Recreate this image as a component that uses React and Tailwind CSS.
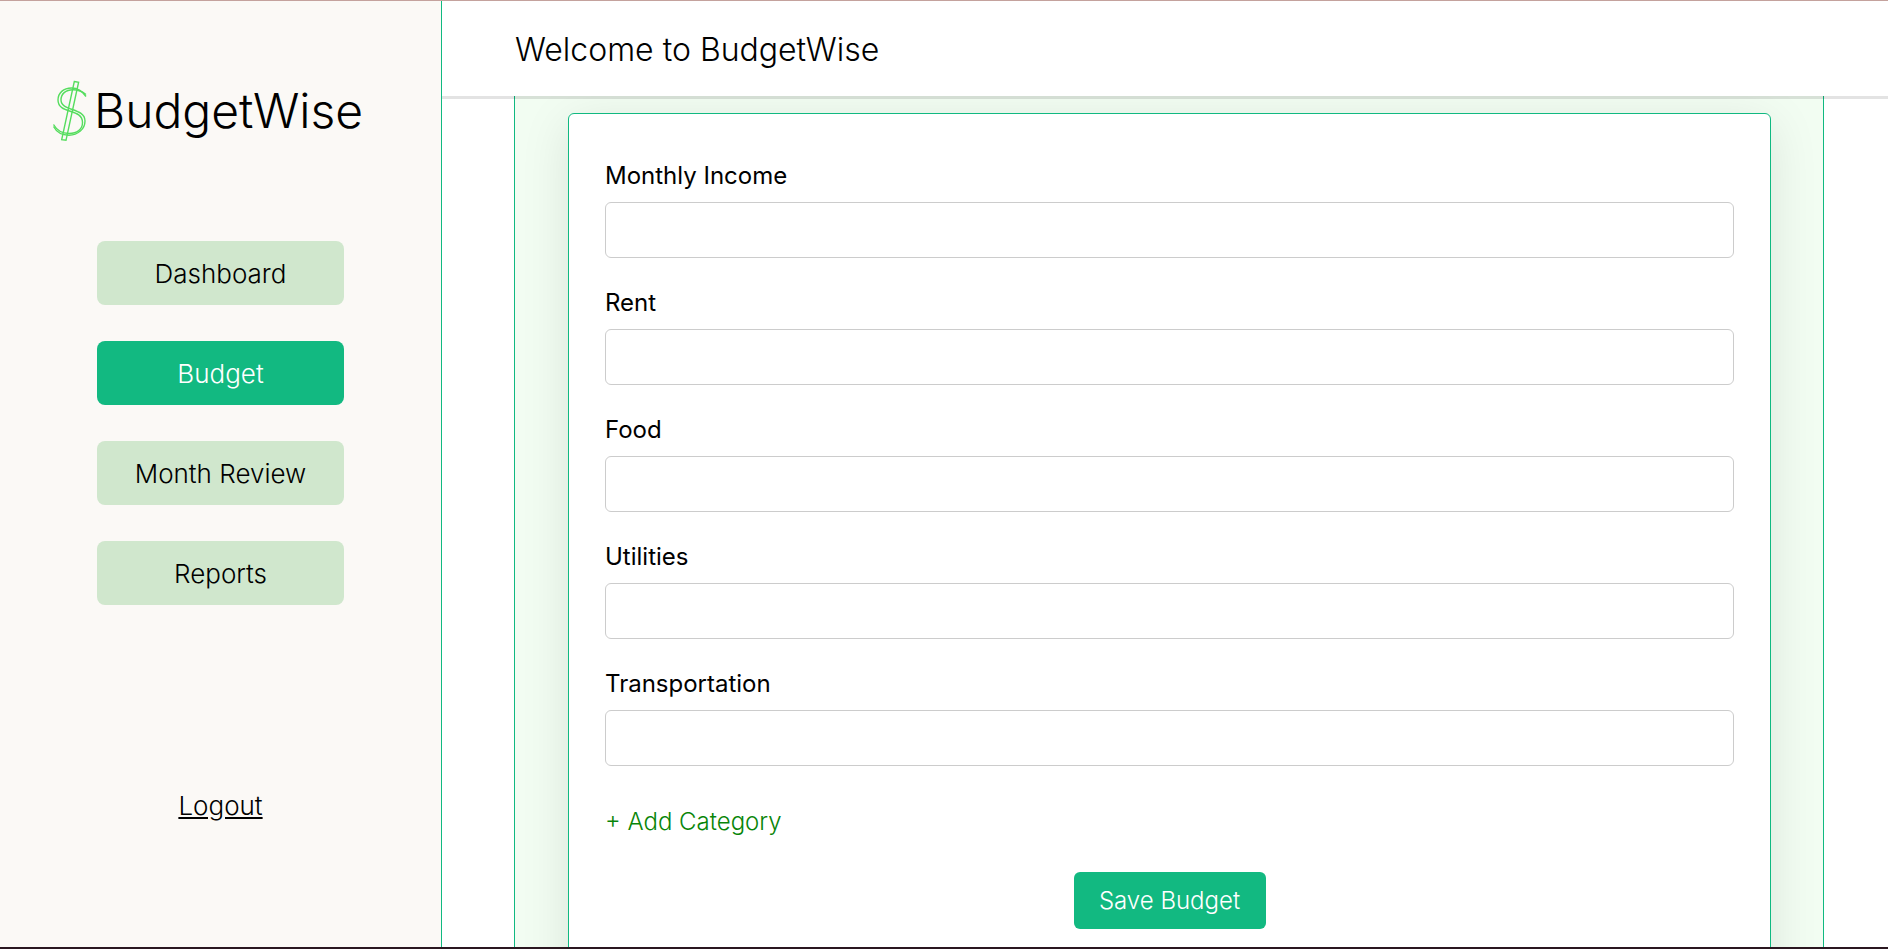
import React from "react";

const navItems = [
  { label: "Dashboard", active: false },
  { label: "Budget", active: true },
  { label: "Month Review", active: false },
  { label: "Reports", active: false },
];

const categories = ["Monthly Income", "Rent", "Food", "Utilities", "Transportation"];

function DollarMark() {
  return (
    <svg viewBox="0 0 36 62" className="h-[62px] w-9 shrink-0" fill="none" stroke="#55dd5e" strokeWidth="1.4" aria-hidden="true">
      <path d="M22.3 1.5 26.6 2.2 14 60.3 9.7 59.6Z" />
      <path d="M34 16.5C29.5 9.8 24 8 19.500 8C11.500 8 6 13 6 20C6 34.500 30.500 28 30.500 42.500C30.500 49.500 25 53.500 17 53.500C10 53.500 5 50.500 1.500 44.500" />
      <path d="M34 14.500C29.500 10.800 25 9.800 21 9.800C13.500 9.800 9 14 9 20C9 31.500 33 27.500 33 41C33 49 26 55.200 17 55.200C10 55.200 4.500 52 1.500 46.500" />
    </svg>
  );
}

function Sidebar() {
  return (
    <aside className="flex w-[442px] shrink-0 flex-col items-center border-r border-[#10b981] bg-[#fbf9f6]">
      <div className="flex w-full items-center gap-1.5 pt-[79px] pl-[52px]">
        <DollarMark />
        <span className="text-[48px] leading-[62px] font-light">BudgetWise</span>
      </div>
      <nav className="mt-[99px] flex w-[247px] flex-col gap-9">
        {navItems.map((item) => (
          <a
            key={item.label}
            href="#"
            className={
              item.active
                ? "rounded-lg bg-[#12b981] pt-0.5 text-center text-[26px] leading-[62px] font-light text-white"
                : "rounded-lg bg-[#d0e7cd] pt-0.5 text-center text-[26px] leading-[62px] font-light"
            }
          >
            {item.label}
          </a>
        ))}
      </nav>
      <a href="#" className="mt-[179px] text-[26px] leading-[44px] font-light underline">
        Logout
      </a>
    </aside>
  );
}

function Field({ label }) {
  const id = label.toLowerCase().replace(" ", "-");
  return (
    <div className="flex flex-col">
      <label htmlFor={id} className="text-2xl leading-9">
        {label}
      </label>
      <input id={id} type="text" className="mt-2 h-14 rounded-md border border-[#cccccc] bg-white px-4 text-2xl" />
    </div>
  );
}

export default function App() {
  return (
    <div className="flex h-screen overflow-hidden border-t border-b-2 border-t-[#c4a29d] border-b-[#2a1720] bg-white font-['Inter',sans-serif] text-black">
      <Sidebar />
      <div className="flex min-w-0 flex-1 flex-col">
        <header className="z-10 bg-white pl-[73px] shadow-[0_3px_0_rgba(0,0,0,0.11)]">
          <h1 className="pt-[3px] text-[32px] leading-[92px] font-light">Welcome to BudgetWise</h1>
        </header>
        <main className="min-h-0 flex-1 overflow-hidden pr-16 pl-[72px]">
          <section className="h-full border-x border-[#10b981] bg-[#f2fdf2] pt-[17px] pr-[52px] pl-[53px]">
            <form className="flex min-h-[1100px] flex-col rounded-md border border-[#10b981] bg-white px-9 pt-[44px] shadow-[0_10px_50px_rgba(0,0,0,0.1)]">
              <div className="flex flex-col gap-[27px]">
                {categories.map((name) => (
                  <Field key={name} label={name} />
                ))}
              </div>
              <button type="button" className="mt-[38px] self-start text-2xl leading-9 font-light text-[#088508]">
                + Add Category
              </button>
              <button type="submit" className="mt-8 h-[57px] w-48 self-center rounded-md bg-[#12b981] text-2xl font-light text-white">
                Save Budget
              </button>
            </form>
          </section>
        </main>
      </div>
    </div>
  );
}
